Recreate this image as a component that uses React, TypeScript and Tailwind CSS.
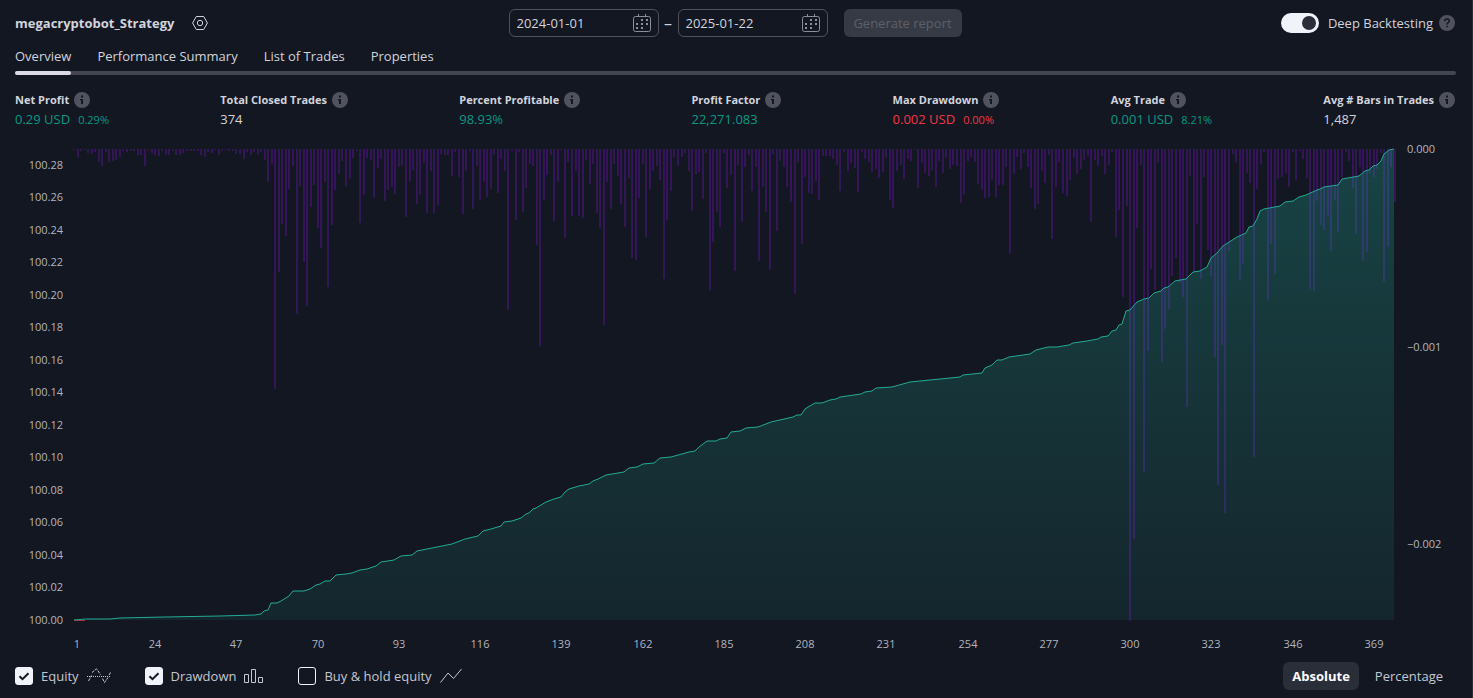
import { useState } from 'react';

interface Stat {
  label: string;
  value: string;
  percent?: string;
  tone: 'plain' | 'up' | 'down';
}

const TABS = ['Overview', 'Performance Summary', 'List of Trades', 'Properties'];

const STATS: Stat[] = [
  { label: 'Net Profit', value: '0.29 USD', percent: '0.29%', tone: 'up' },
  { label: 'Total Closed Trades', value: '374', tone: 'plain' },
  { label: 'Percent Profitable', value: '98.93%', tone: 'up' },
  { label: 'Profit Factor', value: '22,271.083', tone: 'up' },
  { label: 'Max Drawdown', value: '0.002 USD', percent: '0.00%', tone: 'down' },
  { label: 'Avg Trade', value: '0.001 USD', percent: '8.21%', tone: 'up' },
  { label: 'Avg # Bars in Trades', value: '1,487', tone: 'plain' },
];

const TONES = {
  plain: 'text-[#d1d4dc]',
  up: 'text-[#089981]',
  down: 'text-[#f23645]',
};

// Plot area in chart units
const LEFT = 74;
const RIGHT = 1395;
const TOP = 149;
const BOTTOM = 620;

// Drawdown after each trade, in thirds of a chart unit
const DRAWDOWN = [
  2, 24, 6, 2, 11, 14, 9, 39, 50, 9, 39, 36, 33, 24, 6, 9, 6, 6, 18, 18, 50, 2, 11, 18, 20,
  6, 18, 18, 6, 18, 18, 12, 6, 6, 6, 6, 18, 24, 9, 12, 2, 18, 6, 2, 6, 6, 15, 15, 30, 9,
  18, 9, 15, 9, 33, 99, 45, 720, 369, 225, 261, 120, 50, 495, 111, 339, 471, 174, 108, 237, 297, 99, 414, 228, 123,
  75, 36, 111, 87, 27, 6, 222, 138, 27, 33, 147, 57, 30, 156, 123, 114, 135, 54, 51, 204, 96, 63, 165, 138, 42,
  192, 66, 192, 168, 15, 18, 18, 81, 9, 84, 195, 66, 6, 180, 51, 153, 99, 144, 120, 15, 132, 30, 66, 483, 6,
  213, 9, 189, 117, 45, 51, 288, 591, 153, 78, 18, 216, 99, 3, 267, 39, 201, 66, 201, 207, 33, 105, 45, 192, 237,
  528, 99, 180, 45, 81, 165, 234, 87, 327, 333, 147, 45, 264, 120, 66, 51, 93, 390, 213, 126, 24, 51, 24, 12, 66,
  186, 75, 69, 150, 12, 423, 279, 189, 234, 12, 117, 78, 366, 48, 219, 54, 18, 126, 54, 336, 114, 189, 363, 15, 246,
  36, 54, 114, 159, 435, 39, 285, 84, 132, 135, 96, 153, 21, 21, 21, 30, 48, 126, 9, 66, 42, 57, 129, 9, 30,
  39, 69, 60, 87, 69, 27, 153, 177, 66, 48, 90, 30, 36, 3, 117, 42, 72, 81, 63, 114, 36, 72, 27, 60, 48,
  51, 162, 135, 36, 24, 39, 105, 123, 147, 144, 93, 144, 108, 108, 54, 315, 75, 24, 60, 12, 54, 117, 180, 165, 66,
  102, 18, 270, 114, 39, 132, 141, 93, 27, 75, 60, 33, 21, 219, 33, 51, 21, 75, 48, 9, 264, 183, 444, 171, 1415,
  1170, 237, 48, 969, 606, 360, 423, 42, 639, 540, 480, 381, 327, 402, 444, 774, 81, 366, 225, 390, 84, 303, 381, 624, 1008,
  588, 1092, 306, 15, 39, 390, 345, 72, 102, 924, 120, 45, 9, 453, 285, 375, 90, 84, 72, 114, 9, 93, 6, 30, 87,
  420, 426, 156, 228, 243, 204, 306, 153, 249, 84, 9, 36, 117, 255, 54, 336, 309, 72, 84, 60, 12, 399, 294, 54, 159,
];

// Equity curve, x then y
const EQUITY = `
  74,620 86,619 110,619 120,618 165,617 220,616 255,615 261,614 264,611 268,610 271,603 277,603 281,601 289,596 293,591 304,591
  310,589 316,585 320,584 325,581 330,581 336,575 346,574 352,573 360,570 367,569 376,566 381,562 394,560 401,556 412,555
  417,551 437,547 452,544 465,539 478,536 483,531 491,529 501,526 504,522 512,521 521,518 526,514 529,513 533,509 536,508
  546,502 554,499 561,497 565,492 569,489 579,486 589,484 593,481 598,479 606,475 624,472 629,468 637,467 643,464 654,463
  660,458 671,457 689,452 695,451 699,447 707,441 716,441 720,439 727,438 731,432 740,431 746,428 758,427 771,422 793,417
  797,415 801,415 805,409 808,407 815,403 822,403 830,400 836,399 840,397 861,394 865,392 872,391 876,388 892,387 910,382
  930,380 940,379 960,377 963,375 982,373 985,368 992,365 997,360 1002,360 1009,357 1023,355 1030,354 1036,350 1048,347
  1057,347 1063,346 1069,345 1073,343 1087,341 1098,339 1101,337 1108,336 1112,331 1116,330 1119,325 1122,324 1126,311
  1130,310 1137,302 1144,299 1149,298 1154,293 1161,291 1164,288 1168,287 1175,281 1186,279 1193,272 1200,271 1207,267
  1211,258 1217,253 1223,246 1237,237 1246,233 1249,227 1253,226 1257,219 1260,211 1264,209 1280,206 1285,202 1293,201
  1299,197 1306,195 1317,190 1320,189 1324,187 1338,185 1342,179 1359,176 1365,171 1369,170 1373,166 1377,165 1381,161
  1384,154 1389,150 1394,149
`;

const TRADES = Array.from({ length: 17 }, (_, i) => 1 + i * 23);
const EQUITY_TICKS = Array.from({ length: 15 }, (_, i) => 100 + i * 0.02);
const DRAWDOWN_TICKS = ['0.000', '−0.001', '−0.002'];

const tradeX = (index: number) => Math.round(LEFT + (index * (RIGHT - LEFT)) / 374);

function InfoIcon() {
  return (
    <svg className="size-4 shrink-0" viewBox="0 0 16 16" fill="none">
      <circle cx="8" cy="8" r="8" fill="#50535e" />
      <path d="M7 3.5h2v2H7zM6 7h3v5H7V8.2H6z" fill="#131722" />
    </svg>
  );
}

function HelpIcon() {
  return (
    <svg className="size-4 shrink-0" viewBox="0 0 16 16" fill="none">
      <circle cx="8" cy="8" r="8" fill="#50535e" />
      <path d="M5.7 6.2C5.7 4.8 6.7 4 8 4s2.3.8 2.3 2c0 1.5-2.3 1.7-2.3 3.5" stroke="#131722" strokeWidth="1.5" />
      <path d="M7.2 10.7h1.6v1.6H7.2z" fill="#131722" />
    </svg>
  );
}

function CalendarIcon() {
  return (
    <svg className="size-[18px]" viewBox="0 0 18 18" fill="none">
      <rect x="0.5" y="2.5" width="17" height="15" rx="2" stroke="currentColor" />
      <path d="M5.5 0v3M12.5 0v3" stroke="currentColor" />
      <path
        d="M8 5h2v2H8zM13 5h2v2h-2zM3 9h2v2H3zM8 9h2v2H8zM13 9h2v2h-2zM3 13h2v2H3zM8 13h2v2H8z"
        fill="currentColor"
      />
    </svg>
  );
}

function DateField({ label, value }: { label: string; value: string }) {
  return (
    <div className="flex h-7 w-[150px] items-center rounded-md border border-[#50535e] px-[7px]">
      <input
        type="text"
        aria-label={label}
        defaultValue={value}
        className="w-full min-w-0 flex-1 bg-transparent text-[13px] leading-4 font-medium text-[#d1d4dc] outline-none"
      />
      <button type="button" aria-label={`Pick ${label}`} className="text-[#8c8f99]">
        <CalendarIcon />
      </button>
    </div>
  );
}

interface SeriesToggleProps {
  label: string;
  checked: boolean;
  onChange: (checked: boolean) => void;
  children: React.ReactNode;
}

function SeriesToggle({ label, checked, onChange, children }: SeriesToggleProps) {
  return (
    <label className="flex cursor-pointer items-center gap-2">
      <span className="grid">
        <input
          type="checkbox"
          checked={checked}
          onChange={(e) => onChange(e.target.checked)}
          className="col-start-1 row-start-1 size-[18px] appearance-none rounded-[3px] border border-[#f0f3fa] checked:bg-[#f0f3fa]"
        />
        {checked && (
          <svg
            className="pointer-events-none col-start-1 row-start-1 size-[18px]"
            viewBox="0 0 18 18"
            fill="none"
            stroke="#131722"
            strokeWidth="2"
          >
            <path d="M4.5 9.2l3 3 6-6" />
          </svg>
        )}
      </span>
      <span className="text-[13px] leading-5 font-medium text-[#c5c8d1]">{label}</span>
      {children}
    </label>
  );
}

function EquityChart({ equity, drawdown }: { equity: boolean; drawdown: boolean }) {
  return (
    <svg className="block w-full" viewBox="0 134 1472 524" role="img" aria-label="Equity and drawdown by trade">
      <defs>
        <linearGradient id="equity-fill" x1="0" y1={TOP} x2="0" y2={BOTTOM} gradientUnits="userSpaceOnUse">
          <stop offset="0" stopColor="#22ab94" stopOpacity="0.3" />
          <stop offset="1" stopColor="#22ab94" stopOpacity="0.1" />
        </linearGradient>
      </defs>

      {drawdown && (
        <g fill="#331558" shapeRendering="crispEdges">
          {DRAWDOWN.map((depth, i) => (
            <rect key={i} x={tradeX(i) - 1} y={TOP} width="2" height={Math.round(depth / 3)} />
          ))}
        </g>
      )}

      {equity && (
        <>
          <polygon points={`${LEFT},${BOTTOM} ${EQUITY} 1394,${BOTTOM}`} fill="url(#equity-fill)" />
          <path d="M74 620.5h11" stroke="#b22833" />
          <polyline points={EQUITY} fill="none" stroke="#22ab94" strokeWidth="1" />
        </>
      )}

      <g className="text-[11px] font-medium" fill="#b2b5be">
        {EQUITY_TICKS.map((tick, i) => (
          <text key={i} x="63" y={BOTTOM + 4 - Math.round(i * 32.5)} textAnchor="end">
            {tick.toFixed(2)}
          </text>
        ))}
        {DRAWDOWN_TICKS.map((tick, i) => (
          <text key={tick} x="1407" y={TOP + 4 + Math.round(i * 197.5)}>
            {tick}
          </text>
        ))}
        {TRADES.map((trade) => (
          <text key={trade} x={Math.max(tradeX(trade - 1), 77)} y="648" textAnchor="middle">
            {trade}
          </text>
        ))}
      </g>
    </svg>
  );
}

export default function App() {
  const [activeTab, setActiveTab] = useState('Overview');
  const [deep, setDeep] = useState(true);
  const [mode, setMode] = useState('Absolute');
  const [showEquity, setShowEquity] = useState(true);
  const [showDrawdown, setShowDrawdown] = useState(true);
  const [showHold, setShowHold] = useState(false);

  return (
    <div className="min-h-screen border-r border-[#2a2e39] bg-[#131722] font-['Open_Sans',sans-serif] text-[#d1d4dc]">
      {/* Header */}
      <header className="grid grid-cols-[1fr_auto_1fr] items-center pt-[9px] pr-[17px] pl-[15px]">
        <div className="flex items-center gap-[18px]">
          <h1 className="text-[13px] leading-5 font-bold">megacryptobot_Strategy</h1>
          <button type="button" aria-label="Settings">
            <svg className="size-4" viewBox="0 0 16 16" fill="none" stroke="currentColor">
              <path d="M4.3 1.5h7.4L15.4 8l-3.7 6.5H4.3L.6 8z" />
              <circle cx="8" cy="8" r="2.7" />
            </svg>
          </button>
        </div>

        <div className="flex items-center">
          <DateField label="start date" value="2024-01-01" />
          <span className="w-[19px] text-center text-base leading-5">–</span>
          <DateField label="end date" value="2025-01-22" />
          <button
            type="button"
            disabled
            className="ml-4 h-7 w-[118px] rounded-md bg-[#363a45] text-[13px] leading-5 font-medium text-[#5d606b]"
          >
            Generate report
          </button>
        </div>

        <div className="flex items-center justify-end">
          <label className="flex cursor-pointer items-center gap-[9px]">
            <input
              type="checkbox"
              role="switch"
              checked={deep}
              onChange={(e) => setDeep(e.target.checked)}
              className="flex h-5 w-[38px] appearance-none items-center rounded-full bg-[#50535e] px-[3px] before:size-3.5 before:rounded-full before:bg-[#2a2e39] checked:justify-end checked:bg-[#f0f3fa]"
            />
            <span className="text-[13px] leading-5 font-medium">Deep Backtesting</span>
          </label>
          <span className="ml-1.5">
            <HelpIcon />
          </span>
        </div>
      </header>

      {/* Tabs */}
      <div className="mt-[9px] pr-4 pl-[15px]">
        <nav className="relative flex gap-[26px]">
          {TABS.map((tab) => (
            <button
              key={tab}
              type="button"
              onClick={() => setActiveTab(tab)}
              className="text-[13px] leading-5 font-medium"
            >
              {tab}
              <span
                className={`mt-[5px] block h-1 rounded-full ${activeTab === tab ? 'bg-[#dbdbe8]' : 'bg-transparent'}`}
              />
            </button>
          ))}
        </nav>
        <div className="-mt-1 h-1 rounded-full bg-[#434651]" />
      </div>

      {/* Key figures */}
      <dl className="mt-[17px] flex justify-between pr-[17px] pl-[15px]">
        {STATS.map((stat) => (
          <div key={stat.label}>
            <dt className="flex items-center gap-[5px] text-[11px] leading-4 font-bold">
              {stat.label}
              <InfoIcon />
            </dt>
            <dd
              className={`mt-0.5 flex items-baseline gap-2 text-[13px] leading-[18px] font-medium ${TONES[stat.tone]}`}
            >
              {stat.value}
              {stat.percent && <span className="text-[11px]">{stat.percent}</span>}
            </dd>
          </div>
        ))}
      </dl>

      <div className="mt-[5px]">
        <EquityChart equity={showEquity} drawdown={showDrawdown} />
      </div>

      {/* Series and units */}
      <footer className="mt-1 flex items-center justify-between pr-5 pb-2 pl-[15px]">
        <div className="flex items-center gap-[34px]">
          <SeriesToggle label="Equity" checked={showEquity} onChange={setShowEquity}>
            <svg className="h-4 w-6" viewBox="0 0 24 16" fill="none" stroke="#c5c8d1">
              <path d="M0 8.5h24" strokeDasharray="1 1" />
              <path
                d="M1.5 13l3-5.5M5 4.5L9.5.8l4 5.7M15.5 10.5l2 4 3.500-5M22 7l1.500-2.500"
                strokeDasharray="3 1"
              />
            </svg>
          </SeriesToggle>
          <SeriesToggle label="Drawdown" checked={showDrawdown} onChange={setShowDrawdown}>
            <svg className="h-4 w-5" viewBox="0 0 20 16" fill="none" stroke="#c5c8d1">
              <path d="M.5 6.5h4v8h-4zM7.5 1.5h4v13h-4zM14.5 9.5h4v5h-4z" />
            </svg>
          </SeriesToggle>
          <SeriesToggle label="Buy &amp; hold equity" checked={showHold} onChange={setShowHold}>
            <svg className="h-4 w-[22px]" viewBox="0 0 22 16" fill="none" stroke="#c5c8d1">
              <path d="M.5 14.5L8 5l5.5 5.5L21.5 1" />
            </svg>
          </SeriesToggle>
        </div>

        <div className="flex gap-[7px]">
          {['Absolute', 'Percentage'].map((item) => (
            <button
              key={item}
              type="button"
              onClick={() => setMode(item)}
              className={`h-7 rounded-md px-[9px] text-[13px] leading-5 ${
                mode === item ? 'bg-[#2a2e39] font-bold text-white' : 'font-medium text-[#c5c8d1]'
              }`}
            >
              {item}
            </button>
          ))}
        </div>
      </footer>
    </div>
  );
}
